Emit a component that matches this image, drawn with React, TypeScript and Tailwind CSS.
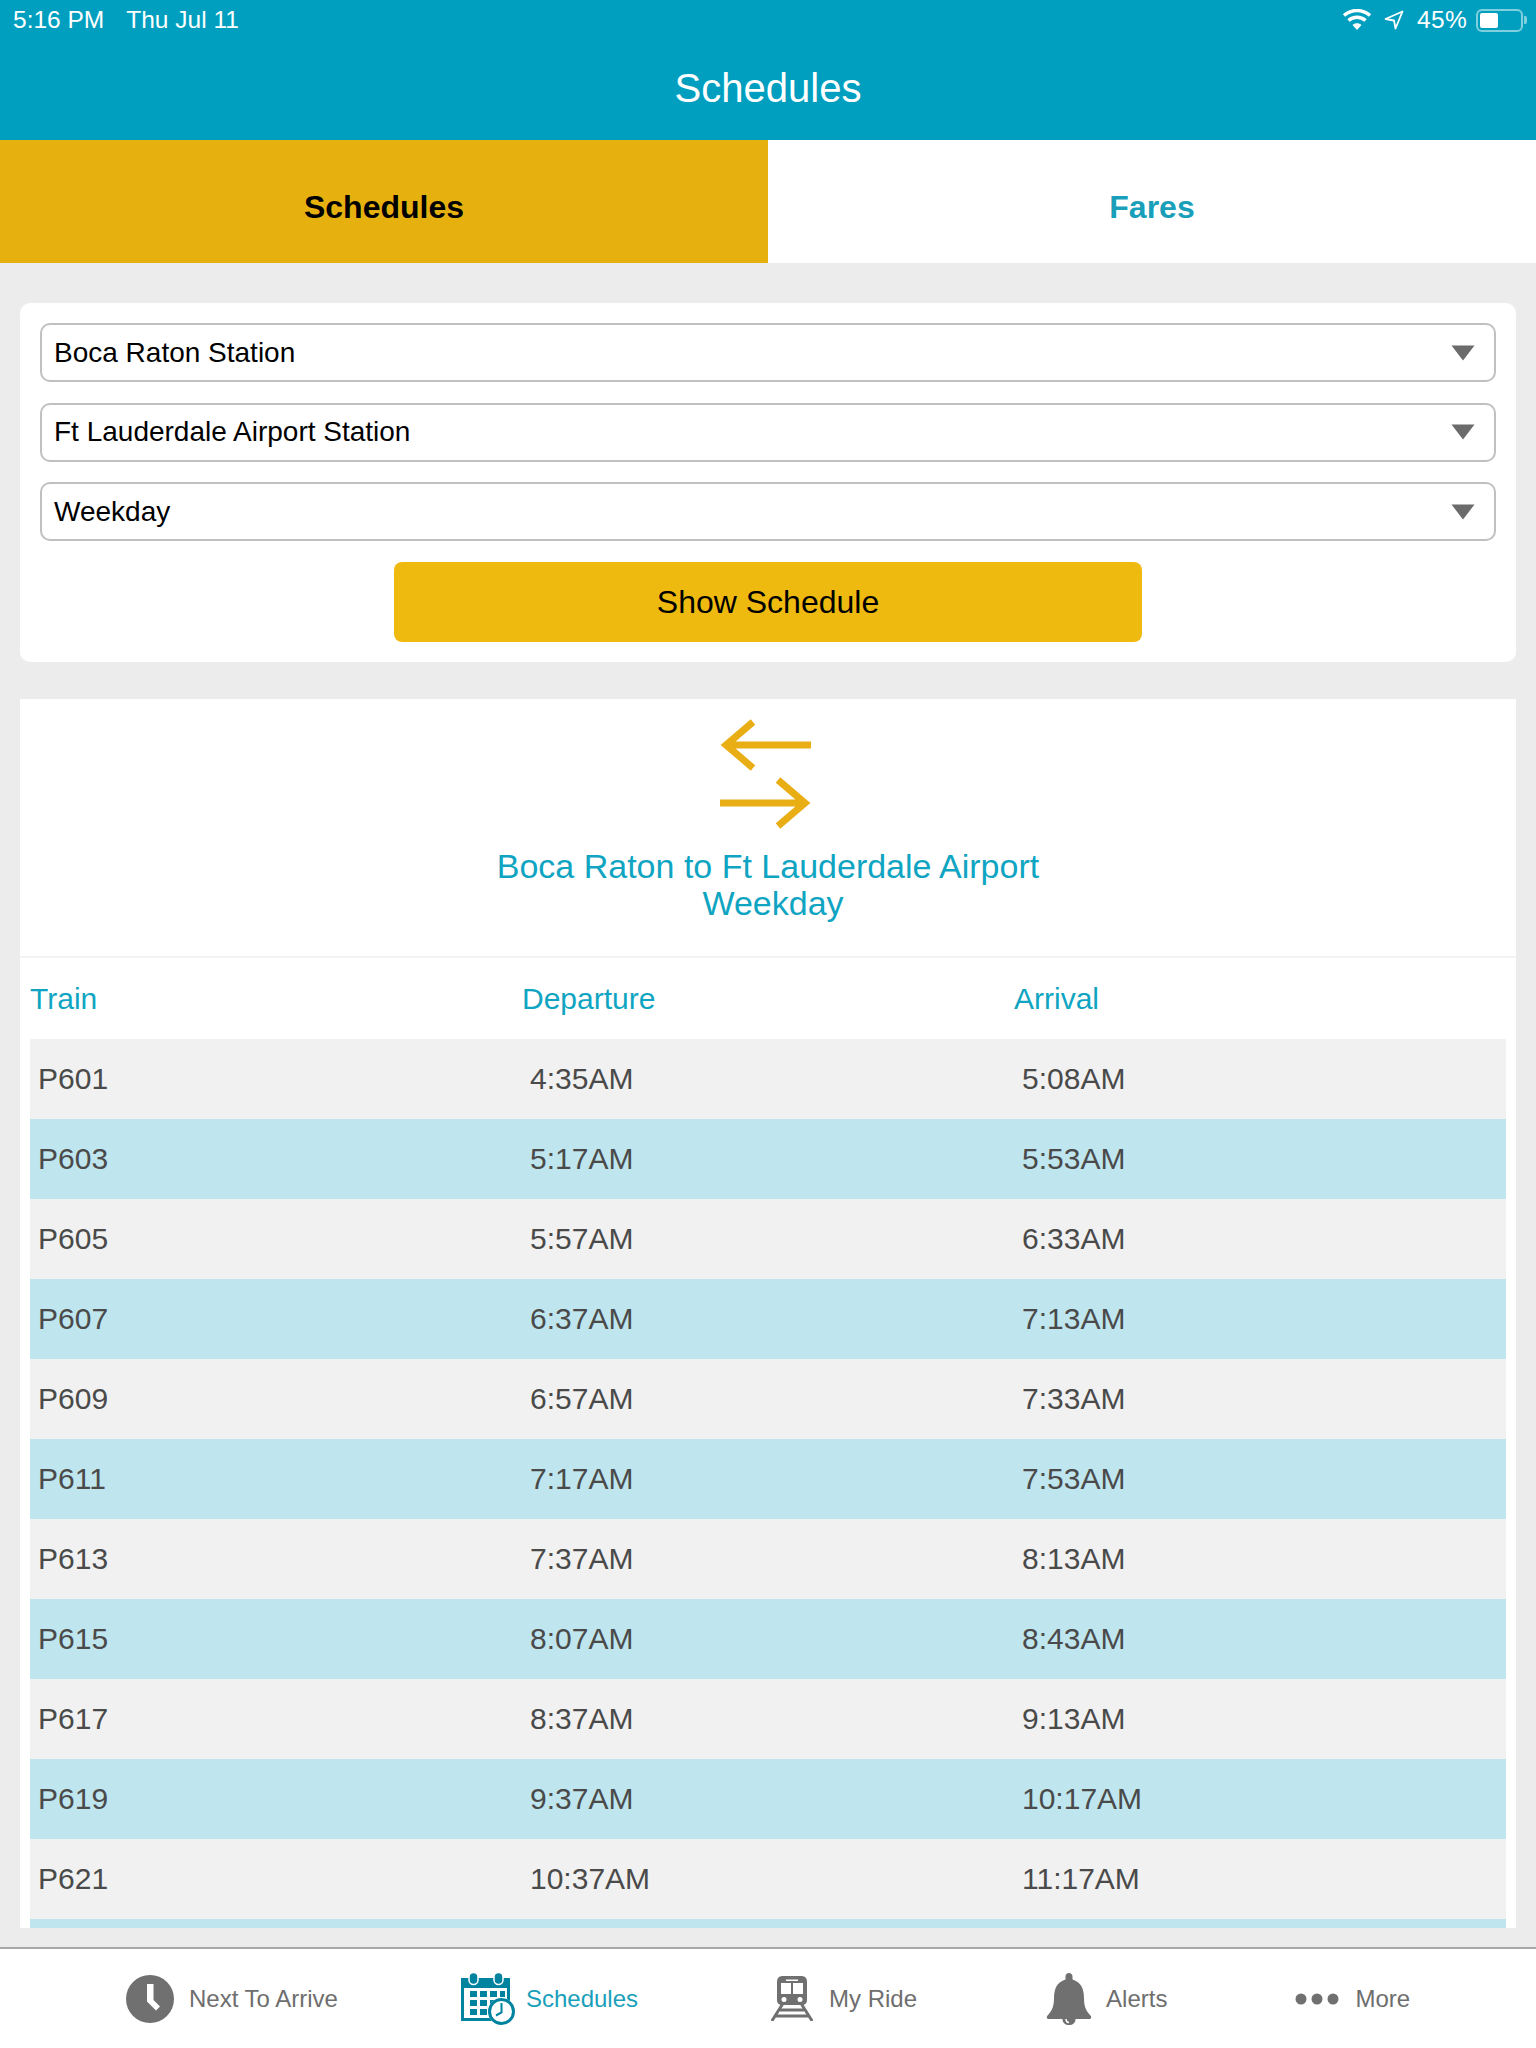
import React from 'react';

const rows = [
  ['P601', '4:35AM', '5:08AM'],
  ['P603', '5:17AM', '5:53AM'],
  ['P605', '5:57AM', '6:33AM'],
  ['P607', '6:37AM', '7:13AM'],
  ['P609', '6:57AM', '7:33AM'],
  ['P611', '7:17AM', '7:53AM'],
  ['P613', '7:37AM', '8:13AM'],
  ['P615', '8:07AM', '8:43AM'],
  ['P617', '8:37AM', '9:13AM'],
  ['P619', '9:37AM', '10:17AM'],
  ['P621', '10:37AM', '11:17AM'],
];

const Select = ({ label }: { label: string }) => (
  <div className="h-[59px] flex items-center justify-between pl-[12px] pr-[19px] border-2 border-[#c0c0c0] rounded-[10px] bg-white text-[28px] text-black">
    <span>{label}</span>
    <svg width="24" height="16" viewBox="0 0 24 16">
      <path d="M0.5 0.5H23.5L12 15.5Z" fill="#6b6b6b" />
    </svg>
  </div>
);

const ClockIcon = () => (
  <svg width="48" height="48" viewBox="0 0 48 48">
    <circle cx="24" cy="24" r="24" fill="#707070" />
    <path d="M21 9h6.500v16l6.500 6.500-4 4-9-9z" fill="#fff" />
  </svg>
);

const CalendarIcon = () => (
  <svg width="54" height="53" viewBox="0 0 54 53">
    <path d="M0 6h49v43H0z" fill="#00839f" />
    <rect x="8" y="0.500" width="9" height="12" rx="4.500" fill="#00839f" stroke="#fff" strokeWidth="1.500" />
    <rect x="33" y="0.500" width="9" height="12" rx="4.500" fill="#00839f" stroke="#fff" strokeWidth="1.500" />
    <path d="M3 16h43v30H3z" fill="#fff" />
    <path d="M9 19h7v6H9zM19 19h7v6h-7zM29 19h7v6h-7zM39 19h5v6h-5zM9 28h7v6H9zM19 28h7v6h-7zM29 28h7v6h-7zM9 37h7v6H9zM19 37h7v6h-7z" fill="#00839f" />
    <circle cx="40.500" cy="39.500" r="13.500" fill="#fff" />
    <circle cx="40.500" cy="39.500" r="12" fill="#fff" stroke="#00839f" strokeWidth="3" />
    <path d="M40.500 31v9.500l-5.500 3" fill="none" stroke="#00839f" strokeWidth="2" />
  </svg>
);

const TrainIcon = () => (
  <svg width="42" height="45" viewBox="0 0 42 45">
    <path d="M12 0h18c4 0 6 2 6 6v18c0 3-2 5-5 5H11c-3 0-5-2-5-5V6c0-4 2-6 6-6z" fill="#707070" />
    <path d="M15 3.500h12v1.500H15z" fill="#fff" />
    <path d="M10 7h10v11H10zM22 7h10v11H22z" fill="#fff" />
    <circle cx="13" cy="23.500" r="2.500" fill="#fff" />
    <circle cx="29" cy="23.500" r="2.500" fill="#fff" />
    <path d="M11 29L1.500 44M31 29l9.500 15" stroke="#707070" strokeWidth="3" strokeLinecap="round" />
    <path d="M9 34h24M5 40h32" stroke="#707070" strokeWidth="3" />
  </svg>
);

const BellIcon = () => (
  <svg width="46" height="52" viewBox="0 0 46 52">
    <path d="M23 0c2 0 3.500 1.500 3.500 3.500v3C35 9 38 16 38 25c0 6 1 12 6 17 2 2 1.500 4-1 4H3c-2.500 0-3-2-1-4 5-5 6-11 6-17 0-9 3-16 11.500-18.500v-3C19.500 1.500 21 0 23 0z" fill="#707070" />
    <path d="M16.500 46h13c0 4-3 6-6.500 6s-6.500-2-6.500-6z" fill="#707070" />
    <path d="M20 46c0 2.500 1.500 3.500 3 3.500" fill="none" stroke="#fff" strokeWidth="1.500" />
  </svg>
);

const DotsIcon = () => (
  <svg width="44" height="12" viewBox="0 0 44 12">
    <circle cx="6" cy="6" r="5.500" fill="#707070" />
    <circle cx="22" cy="6" r="5.500" fill="#707070" />
    <circle cx="38" cy="6" r="5.500" fill="#707070" />
  </svg>
);

const NavItem = ({ icon, label, active, className }: { icon: React.ReactNode; label: string; active?: boolean; className: string }) => (
  <div className={`flex items-center ${className}`}>
    {icon}
    <span className={`text-[24px] ${active ? 'text-[#1a9fba]' : 'text-[#6e6e6e]'}`}>{label}</span>
  </div>
);

export default function App() {
  return (
    <div className="h-[2048px] w-[1536px] flex flex-col overflow-hidden bg-[#ececec] font-['Liberation_Sans',Arial,sans-serif]">
      <header className="h-[140px] shrink-0 bg-[#009fbf] text-white">
        <div className="h-[40px] flex items-center justify-between pl-[13px] pr-[9px] text-[24.500px]">
          <div className="flex gap-[22px]">
            <span>5:16 PM</span>
            <span>Thu Jul 11</span>
          </div>
          <div className="flex items-center">
            <svg width="30" height="22" viewBox="0 0 30 22" className="mr-[12px]">
              <path d="M15 21l-4.500-5c2.500-2.200 6.500-2.200 9 0z" fill="#fff" />
              <path d="M6.500 11.500c4.800-4.300 12.200-4.300 17 0" fill="none" stroke="#fff" strokeWidth="3.500" />
              <path d="M2 6.500c7.500-6.600 18.500-6.600 26 0" fill="none" stroke="#fff" strokeWidth="3.500" />
            </svg>
            <svg width="20" height="20" viewBox="0 0 20 20" className="mr-[13px]">
              <path d="M18.500 1.500L1.500 9l8.500 1.500L11.500 18.500z" fill="none" stroke="#fff" strokeWidth="1.800" strokeLinejoin="round" />
            </svg>
            <span className="mr-[9px] tracking-[0.3px]">45%</span>
            <div className="w-[47px] h-[23px] rounded-[6px] border-2 border-[#7fcfdf] p-[2px] flex">
              <div className="w-[18px] bg-white rounded-[2px]" />
            </div>
            <div className="w-[3px] h-[8px] bg-[#7fcfdf] rounded-r-[2px] ml-[1px]" />
          </div>
        </div>
        <div className="h-[96px] flex items-center justify-center text-[40px]">Schedules</div>
      </header>

      <div className="h-[123px] shrink-0 flex text-[32px] font-bold">
        <div className="w-1/2 pt-[10px] flex items-center justify-center bg-[#e6b00f] text-black">Schedules</div>
        <div className="w-1/2 pt-[10px] flex items-center justify-center bg-white text-[#1a9fba]">Fares</div>
      </div>

      <main className="flex-1 min-h-0 overflow-hidden px-[20px] pt-[40px]">
        <section className="h-[359px] rounded-[10px] bg-white p-[20px] flex flex-col">
          <div className="flex flex-col gap-[20.500px]">
            <Select label="Boca Raton Station" />
            <Select label="Ft Lauderdale Airport Station" />
            <Select label="Weekday" />
          </div>
          <div className="mt-[21px] mx-auto w-[748px] h-[80px] rounded-[8px] bg-[#efba10] flex items-center justify-center text-[32px] text-black">
            Show Schedule
          </div>
        </section>

        <section className="mt-[37px] h-[1229px] overflow-hidden bg-white">
          <div className="h-[259px] border-b-2 border-[#f3f3f3] flex flex-col items-center">
            <svg width="92" height="112" viewBox="0 0 92 112" className="mt-[19px] mr-[5px]">
              <path d="M91 27H6M33 4L6 27l27 23" fill="none" stroke="#e9ae14" strokeWidth="7" />
              <path d="M0 85h85M58 62l27 23-27 23" fill="none" stroke="#e9ae14" strokeWidth="7" />
            </svg>
            <div className="mt-[18px] text-center text-[34px] leading-[37px] text-[#0fa5c2]">
              <div>Boca Raton to Ft Lauderdale Airport</div>
              <div className="pl-[10px]">Weekday</div>
            </div>
          </div>
          <div className="px-[10px]">
            <div className="grid grid-cols-3 h-[81px] items-center text-[30px] text-[#0fa5c2]">
              <span>Train</span>
              <span>Departure</span>
              <span>Arrival</span>
            </div>
            {rows.map((row, i) => (
              <div key={row[0]} className={`grid grid-cols-3 h-[80px] items-center pb-[2px] text-[30px] text-[#4a4a4a] ${i % 2 === 0 ? 'bg-[#f1f1f1]' : 'bg-[#bfe5ee]'}`}>
                <span className="pl-[8px]">{row[0]}</span>
                <span className="pl-[8px]">{row[1]}</span>
                <span className="pl-[8px]">{row[2]}</span>
              </div>
            ))}
            <div className="h-[80px] bg-[#bfe5ee]" />
          </div>
        </section>
      </main>

      <nav className="h-[101px] shrink-0 border-t-2 border-[#a8a8a8] bg-white flex items-center pl-[126px]">
        <NavItem icon={<ClockIcon />} label="Next To Arrive" className="gap-[15px]" />
        <NavItem icon={<CalendarIcon />} label="Schedules" active className="gap-[11px] ml-[123px]" />
        <NavItem icon={<TrainIcon />} label="My Ride" className="gap-[16px] ml-[133px]" />
        <NavItem icon={<BellIcon />} label="Alerts" className="gap-[14px] ml-[129px]" />
        <NavItem icon={<DotsIcon />} label="More" className="gap-[16px] ml-[128px]" />
      </nav>
    </div>
  );
}
